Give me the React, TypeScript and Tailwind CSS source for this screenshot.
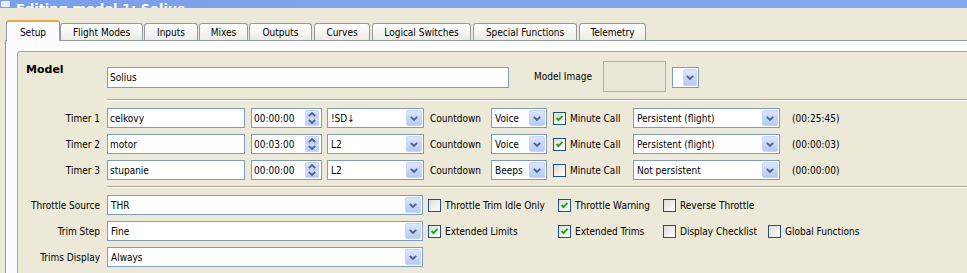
import type { ReactNode } from 'react';

const TABS = [
  { label: 'Setup', w: 'w-[54px]', ml: 'ml-0' },
  { label: 'Flight Modes', w: 'w-[83px]', ml: 'ml-0' },
  { label: 'Inputs', w: 'w-[54px]', ml: 'ml-[1px]' },
  { label: 'Mixes', w: 'w-[49px]', ml: 'ml-[1px]' },
  { label: 'Outputs', w: 'w-[63px]', ml: 'ml-[1px]' },
  { label: 'Curves', w: 'w-[56px]', ml: 'ml-[2px]' },
  { label: 'Logical Switches', w: 'w-[99px]', ml: 'ml-[2px]' },
  { label: 'Special Functions', w: 'w-[104px]', ml: 'ml-[2px]' },
  { label: 'Telemetry', w: 'w-[67px]', ml: 'ml-[2px]' },
];

const TIMERS = [
  { name: 'celkovy', time: '00:00:00', sw: '!SD\u2193', mode: 'Voice', minute: true, persist: 'Persistent (flight)', value: '(00:25:45)' },
  { name: 'motor', time: '00:03:00', sw: 'L2', mode: 'Voice', minute: true, persist: 'Persistent (flight)', value: '(00:00:03)' },
  { name: 'stupanie', time: '00:00:00', sw: 'L2', mode: 'Beeps', minute: false, persist: 'Not persistent', value: '(00:00:00)' },
];

function Chevron({ up = false }: { up?: boolean }) {
  return (
    <svg width="8" height="5" viewBox="0 0 8 5">
      <path
        d={up ? 'M0.8 4.2 L4 1 L7.2 4.2' : 'M0.8 0.8 L4 4 L7.2 0.8'}
        fill="none"
        stroke="#4d6185"
        strokeWidth="1.8"
      />
    </svg>
  );
}

function DropButton() {
  return (
    <div className="flex h-full w-[16px] items-center justify-center rounded-[2px] border border-[#c6d5fa] bg-gradient-to-b from-[#dbe6fd] to-[#b5c9f5]">
      <Chevron />
    </div>
  );
}

function Select({ value, className }: { value: string; className: string }) {
  return (
    <div className={`flex h-[20px] border border-[#7f9db9] bg-white p-[1px] ${className}`}>
      <div className="flex flex-1 items-center overflow-hidden whitespace-nowrap pl-[2px]">{value}</div>
      <DropButton />
    </div>
  );
}

function TextInput({ value, className }: { value: string; className: string }) {
  return (
    <div className={`flex h-[20px] items-center border border-[#7f9db9] bg-white pl-[2px] whitespace-nowrap ${className}`}>
      {value}
    </div>
  );
}

function SpinBox({ value }: { value: string }) {
  return (
    <div className="ml-[6px] flex h-[20px] w-[71px] border border-[#7f9db9] bg-white py-[1px] pr-[2px]">
      <div className="flex flex-1 items-center pl-[2px]">{value}</div>
      <div className="flex w-[14px] flex-col">
        <div className="flex flex-1 items-center justify-center rounded-t-[2px] border border-[#c6d5fa] bg-gradient-to-b from-[#dbe6fd] to-[#bccef6]">
          <Chevron up />
        </div>
        <div className="flex flex-1 items-center justify-center rounded-b-[2px] border border-t-0 border-[#c6d5fa] bg-gradient-to-b from-[#d3e0fc] to-[#b5c9f5]">
          <Chevron />
        </div>
      </div>
    </div>
  );
}

function CheckBox({ checked }: { checked: boolean }) {
  return (
    <div className="flex h-[13px] w-[13px] shrink-0 items-center justify-center border border-[#1c5180] bg-gradient-to-br from-[#dcdcd7] to-white">
      {checked && (
        <svg width="9" height="9" viewBox="0 0 9 9">
          <path d="M1.5 4 L3.5 6.2 L7.5 1.8" fill="none" stroke="#21a121" strokeWidth="1.9" />
        </svg>
      )}
    </div>
  );
}

function Check({ checked, label, className }: { checked: boolean; label: string; className: string }) {
  return (
    <div className={`flex items-center gap-[4px] whitespace-nowrap ${className}`}>
      <CheckBox checked={checked} />
      <span>{label}</span>
    </div>
  );
}

function Label({ children }: { children: ReactNode }) {
  return <div className="w-[89px] shrink-0 pr-[7px] text-right whitespace-nowrap">{children}</div>;
}

function Separator() {
  return <div className="ml-[89px] h-[2px] border-t border-b border-t-[#aca899] border-b-white" />;
}

export default function App() {
  return (
    <div className="flex h-[273px] w-[967px] flex-col overflow-hidden bg-[#ece9d8] font-['DejaVu_Sans_Condensed','Liberation_Sans',sans-serif] text-[10px] text-black">
      {/* ── Title bar (cut off at the top of the shot) ── */}
      <div className="flex h-[8px] shrink-0 items-end overflow-hidden bg-gradient-to-r from-[#7b9ee8] to-[#86a8ee]">
        <div className="mb-[1px] ml-[1px] h-[6px] w-[9px] rounded-[1px] bg-[#e6edf9]" />
        <div className="ml-[6px] mb-[-7px] font-['DejaVu_Sans','Liberation_Sans',sans-serif] text-[13px] leading-[13px] font-bold text-white">
          Editing model 1: Solius
        </div>
      </div>

      {/* ── Tabs ── */}
      <div className="mt-[12px] flex h-[20px] shrink-0 items-end pl-[6px]">
        {TABS.map((t, i) =>
          i === 0 ? (
            <div
              key={t.label}
              className={`relative z-10 -mb-px flex h-[21px] ${t.w} items-center justify-center rounded-t-[3px] border-x border-t-2 border-x-[#919b9c] border-t-[#f0a640] bg-[#fcfcfe] pt-[1px]`}
            >
              {t.label}
            </div>
          ) : (
            <div
              key={t.label}
              className={`flex h-[17px] ${t.w} ${t.ml} items-center justify-center rounded-t-[3px] border border-b-0 border-[#919b9c] bg-gradient-to-b from-white to-[#ecebe5] whitespace-nowrap`}
            >
              {t.label}
            </div>
          ),
        )}
      </div>

      {/* ── Tab pane ── */}
      <div className="ml-[5px] flex flex-1 flex-col border-t border-l border-[#919b9c] bg-[#fcfcfe] pt-[10px] pl-[11px]">
        <div className="flex-1 rounded-tl-[3px] border-t border-l border-[#a9a89d] bg-[#ece9d8]">
          {/* Model row */}
          <div className="mt-[9px] flex h-[31px] items-start">
            <div className="w-[89px] shrink-0 pl-[8px] pt-[1px] font-['DejaVu_Sans','Liberation_Sans',sans-serif] text-[11px] font-bold">
              Model
            </div>
            <TextInput value="Solius" className="mt-[6px] h-[21px] w-[402px]" />
            <div className="ml-[25px] flex h-[31px] w-[69px] items-center whitespace-nowrap">Model Image</div>
            <div className="h-[31px] w-[63px] border border-[#b3b0a2] bg-[#ebe8d8]" />
            <div className="mt-[6px] ml-[6px] flex h-[21px] w-[27px] border border-[#7f9db9] bg-white p-[1px] pl-[10px]">
              <DropButton />
            </div>
          </div>

          <div className="mt-[7px]">
            <Separator />
          </div>

          {/* Timers */}
          <div className="mt-[7px] flex flex-col gap-[6px]">
            {TIMERS.map((t, i) => (
              <div key={t.name} className="flex h-[20px] items-center">
                <Label>Timer {i + 1}</Label>
                <TextInput value={t.name} className="w-[138px]" />
                <SpinBox value={t.time} />
                <Select value={t.sw} className="ml-[5px] w-[97px]" />
                <div className="ml-[6px] w-[61px] shrink-0 whitespace-nowrap">Countdown</div>
                <Select value={t.mode} className="w-[56px]" />
                <div className="ml-[6px] w-[80px] shrink-0">
                  <Check checked={t.minute} label="Minute Call" className="" />
                </div>
                <Select value={t.persist} className="w-[147px]" />
                <div className="ml-[12px] whitespace-nowrap">{t.value}</div>
              </div>
            ))}
          </div>

          <div className="mt-[6px]">
            <Separator />
          </div>

          {/* General settings */}
          <div className="mt-[7px] flex flex-col gap-[6px]">
            <div className="flex h-[20px] items-center">
              <Label>Throttle Source</Label>
              <Select value="THR" className="w-[316px]" />
              <Check checked={false} label="Throttle Trim Idle Only" className="ml-[5px] w-[130px]" />
              <Check checked label="Throttle Warning" className="w-[105px]" />
              <Check checked={false} label="Reverse Throttle" className="w-[105px]" />
            </div>
            <div className="flex h-[20px] items-center">
              <Label>Trim Step</Label>
              <Select value="Fine" className="w-[316px]" />
              <Check checked label="Extended Limits" className="ml-[5px] w-[130px]" />
              <Check checked label="Extended Trims" className="w-[105px]" />
              <Check checked={false} label="Display Checklist" className="w-[105px]" />
              <Check checked={false} label="Global Functions" className="" />
            </div>
            <div className="flex h-[20px] items-center">
              <Label>Trims Display</Label>
              <Select value="Always" className="w-[316px]" />
            </div>
          </div>
        </div>
      </div>
    </div>
  );
}
